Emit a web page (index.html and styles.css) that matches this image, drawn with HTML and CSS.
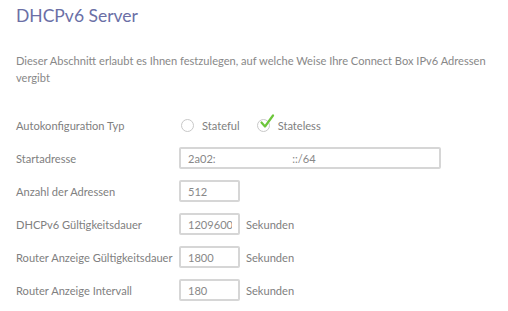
FILE: index.html
```html
<!DOCTYPE html>
<html lang="de">
<head>
	<meta charset="UTF-8">
	<title>DHCPv6 Server</title>
	<link rel="stylesheet" href="styles.css">
</head>
<body>
	<!-- Titel -->
	<h1 class="mtit">DHCPv6 Server</h1>
	<p class="desc">Dieser Abschnitt erlaubt es Ihnen festzulegen, auf welche Weise Ihre Connect Box IPv6 Adressen vergibt</p>

	<!-- Formular -->
	<form class="frm">
		<div class="row">
			<label class="lbl">Autokonfiguration Typ</label>
			<div class="radios">
				<span class="radio"><span class="circle"></span>Stateful</span>
				<span class="radio on">
					<span class="circle">
						<svg class="check" width="16" height="16" viewBox="0 0 16 16"><path d="M2.5 8.5 L6 12.5 L14 1.5" fill="none" stroke="#6cc63a" stroke-width="2.2" stroke-linecap="round" stroke-linejoin="round"/></svg>
					</span>Stateless
				</span>
			</div>
		</div>
		<div class="row">
			<label class="lbl">Startadresse</label>
			<input class="inp wide" type="text" value="2a02:                           ::/64">
		</div>
		<div class="row">
			<label class="lbl">Anzahl der Adressen</label>
			<input class="inp" type="text" value="512">
		</div>
		<div class="row">
			<label class="lbl">DHCPv6 Gültigkeitsdauer</label>
			<input class="inp" type="text" value="1209600">
			<span class="unit">Sekunden</span>
		</div>
		<div class="row">
			<label class="lbl">Router Anzeige Gültigkeitsdauer</label>
			<input class="inp" type="text" value="1800">
			<span class="unit">Sekunden</span>
		</div>
		<div class="row">
			<label class="lbl">Router Anzeige Intervall</label>
			<input class="inp" type="text" value="180">
			<span class="unit">Sekunden</span>
		</div>
	</form>
</body>
</html>
```

FILE: styles.css
```css
html,body,h1,p{
	margin: 0;
	padding: 0;
}
body{
	background-color: #fff;
	font-family: Lato, "Open Sans", sans-serif;
	color: #808080;
	font-size: 11.1px;
	padding: 0 10px 0 16px;
}

/* 제목 */
.mtit{
	padding-top: 4px;
	font-size: 17.5px;
	font-weight: 400;
	color: #6b6fa6;
	line-height: 24px;
}
.desc{
	margin-top: 24px;
	line-height: 17px;
	color: #888;
}

/* 폼 */
.frm{
	margin-top: 28px;
}
.row{
	display: flex;
	align-items: center;
	height: 22px;
	margin-bottom: 11px;
}
.lbl{
	width: 163px;
	flex: none;
	white-space: nowrap;
}
.radios{
	display: flex;
	align-items: center;
	gap: 17px;
	padding-left: 2px;
}
.radio{
	display: flex;
	align-items: center;
}
.circle{
	position: relative;
	width: 11px;
	height: 11px;
	border: 1px solid #c8c8c8;
	border-radius: 50%;
	margin-right: 8px;
}
.check{
	position: absolute;
	left: 1px;
	top: -6px;
}
.inp{
	box-sizing: border-box;
	width: 61px;
	height: 22px;
	border: 2px solid #d6d6d6;
	border-radius: 2px;
	padding: 0 6px 0 7px;
	font-family: inherit;
	font-size: 11.1px;
	color: #888;
	outline: none;
}
.inp.wide{
	width: 262px;
}
.unit{
	margin-left: 6px;
}
```
